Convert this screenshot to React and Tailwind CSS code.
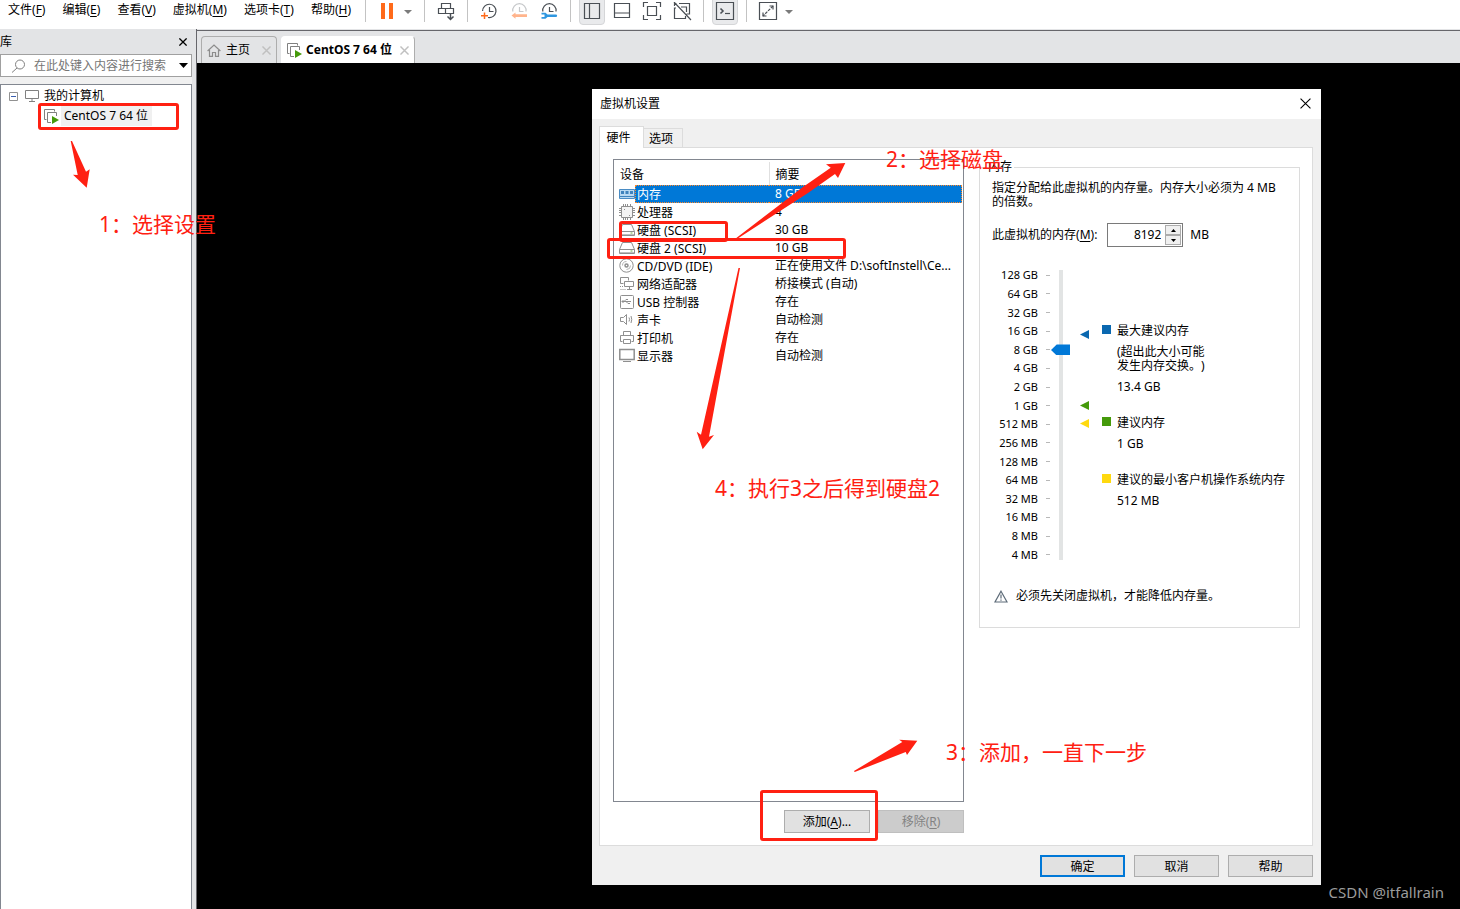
import React, { useState } from 'react';

const menus = [
    { text: '文件', hotkey: 'F' },
    { text: '编辑', hotkey: 'E' },
    { text: '查看', hotkey: 'V' },
    { text: '虚拟机', hotkey: 'M' },
    { text: '选项卡', hotkey: 'T' },
    { text: '帮助', hotkey: 'H' },
];

const devices = [
    { icon: 'memory', name: '内存', summary: '8 GB' },
    { icon: 'cpu', name: '处理器', summary: '4' },
    { icon: 'disk', name: '硬盘 (SCSI)', summary: '30 GB' },
    { icon: 'disk', name: '硬盘 2 (SCSI)', summary: '10 GB' },
    { icon: 'cd', name: 'CD/DVD (IDE)', summary: '正在使用文件 D:\\softInstell\\Ce...' },
    { icon: 'net', name: '网络适配器', summary: '桥接模式 (自动)' },
    { icon: 'usb', name: 'USB 控制器', summary: '存在' },
    { icon: 'sound', name: '声卡', summary: '自动检测' },
    { icon: 'printer', name: '打印机', summary: '存在' },
    { icon: 'display', name: '显示器', summary: '自动检测' },
];

const sizes = [
    '128 GB', '64 GB', '32 GB', '16 GB', '8 GB', '4 GB', '2 GB', '1 GB',
    '512 MB', '256 MB', '128 MB', '64 MB', '32 MB', '16 MB', '8 MB', '4 MB',
];

const Hotkey = ({ text, hotkey }) => (
    <>{text}(<span className="underline underline-offset-2">{hotkey}</span>)</>
);

const Separator = () => <span className="mx-1.5 h-[22px] w-px bg-[#c3c3c3]" />;

const ToolButton = ({ label, active, children }) => (
    <button aria-label={label} className="flex h-6 w-[30px] items-center justify-center">
        <span className={active
            ? 'flex h-[26px] w-[26px] items-center justify-center rounded-b border border-[#d5d6d8] bg-[#e9eaec]'
            : 'flex items-center justify-center'}>
            <svg width="20" height="20" viewBox="0 0 20 20" fill="none" stroke="#4a4f55" strokeWidth="1.2">
                {children}
            </svg>
        </span>
    </button>
);

const Caret = ({ label }) => (
    <button aria-label={label} className="mr-1 flex h-6 w-3 items-center justify-center">
        <svg width="8" height="4" viewBox="0 0 8 4"><path d="M0 0h8L4 4z" fill="#7b7b7b" /></svg>
    </button>
);

const Toolbar = () => (
    <div className="flex">
        <Separator />
        <ToolButton label="暂停">
            <path d="M4 1h4v16H4zM12 1h4v16h-4z" fill="#ff6a1a" stroke="none" />
        </ToolButton>
        <Caret label="电源选项" />
        <Separator />
        <ToolButton label="发送按键">
            <path d="M5.500 1.500h9v5h-9zM2.500 6.500h15v5h-15zM9.500 6.500v5" />
            <path d="M14.500 11.500v6M11.500 14.500l3 3 3-3" strokeWidth="1.500" />
        </ToolButton>
        <Separator />
        <ToolButton label="拍摄快照">
            <path d="M3.600 9A6.700 6.700 0 1 1 9 15.500M10.500 5v4.500h4" />
            <path d="M5.500 10.500v6.500M2 13.700h7" stroke="#ff6a1a" strokeWidth="1.500" />
        </ToolButton>
        <ToolButton label="恢复快照">
            <path d="M3.800 9.500A6.700 6.700 0 1 1 17 9.500M10.500 5v4.500h4" stroke="#c6c8ca" />
            <path d="M2.500 13.500l4-3v1.800H18v2.700H6.500v1.800z" fill="#ffb48c" stroke="none" />
        </ToolButton>
        <ToolButton label="管理快照">
            <path d="M3.800 9.500A6.700 6.700 0 1 1 17 9.500M10.500 5v4.500h4" />
            <path d="M2.500 10.700h4l2 1.700h8.300a1.300 1.300 0 0 1 0 2.700H8.500l-2 1.700h-4v-1.700H5.500v-2.700h-3z" fill="#2f97e0" stroke="none" />
        </ToolButton>
        <Separator />
        <ToolButton label="显示库" active>
            <path d="M2.500 1.500h15v15h-15zM7.500 1.500v15" />
        </ToolButton>
        <ToolButton label="缩略图栏">
            <path d="M2.500 1.500h15v14h-15zM2.500 11h15" />
        </ToolButton>
        <ToolButton label="全屏">
            <path d="M1.500 5V0.500H6M14 0.500h4.500V5M18.500 13v4.500H14M6 17.500H1.500V13M5.500 4.500h9v9h-9z" />
        </ToolButton>
        <ToolButton label="Unity">
            <path d="M7 1.500h10.500v10.500h-3M9 5h5.500v5M4 6H2.500v10.500H13.500V14M2.500 4V1.500h2M2 0l17 18" />
        </ToolButton>
        <Separator />
        <ToolButton label="控制台视图" active>
            <path d="M1.500 0.500h17v17h-17z" />
            <path d="M5.500 6.500L8 9l-2.500 2.500" strokeWidth="1.600" />
            <path d="M10 11.500h5" />
        </ToolButton>
        <Separator />
        <ToolButton label="拉伸客户机">
            <path d="M1.500 0.500h17v17h-17zM11.500 4H15v3.500M8.500 14H5v-3.500" />
            <path d="M15 4L5 14" strokeDasharray="3 1" />
        </ToolButton>
        <Caret label="拉伸选项" />
    </div>
);

const VmIcon = () => (
    <svg width="15" height="15" viewBox="0 0 15 15" className="shrink-0" fill="none" stroke="#808080">
        <path d="M2.500 10.500h-2v-10h10v2" />
        <path d="M7 13.500H3.500v-10h9V7" />
        <path d="M8 7l7 4-7 4z" fill="#459a0b" stroke="none" />
    </svg>
);

const CloseIcon = ({ size, color, width }) => (
    <svg width={size} height={size} viewBox="0 0 10 10" stroke={color} strokeWidth={width}>
        <path d="M0.500 0.500l9 9M9.500 0.500l-9 9" />
    </svg>
);

const Library = () => (
    <aside className="flex w-[197px] shrink-0 flex-col border-r border-[#66666b] bg-[#e3e4e6]">
        <div className="flex h-[25px] items-center justify-between pr-[9px]">
            <h2>库</h2>
            <button aria-label="关闭库"><CloseIcon size={8} color="#000" width={1.6} /></button>
        </div>
        <div className="mr-1 flex h-[23px] items-center border border-[#a0a0a0] bg-white pr-[3px] pl-2.5">
            <svg width="15" height="14" viewBox="0 0 15 14" fill="none" stroke="#808080" className="shrink-0">
                <circle cx="9" cy="5.500" r="4.500" />
                <path d="M6 9l-5 4.500" />
            </svg>
            <input
                type="text"
                aria-label="搜索"
                placeholder="在此处键入内容进行搜索"
                className="ml-2 min-w-0 flex-1 outline-none placeholder:text-[#757575]"
            />
            <button aria-label="搜索选项">
                <svg width="9" height="5" viewBox="0 0 9 5"><path d="M0 0h9L4.500 5z" /></svg>
            </button>
        </div>
        <div className="mr-1 h-[7px] bg-[#f0f0f0]" />
        <ul className="mr-1 flex-1 border border-b-0 border-[#828790] bg-white pt-px leading-5">
            <li>
                <div className="flex items-center pl-2">
                    <svg width="9" height="9" viewBox="0 0 9 9" fill="#fff" stroke="#919191">
                        <path d="M0.500 0.500h8v8h-8z" />
                        <path d="M2 4.500h5" stroke="#3a5fb0" />
                    </svg>
                    <svg width="14" height="12" viewBox="0 0 14 12" fill="none" stroke="#808080" className="mr-[5px] ml-[7px]">
                        <path d="M0.500 0.500h13v8h-13zM7 9v2M4 11.500h6" />
                    </svg>
                    我的计算机
                </div>
                <ul>
                    <li className="flex items-center pl-[43px]">
                        <VmIcon />
                        <span className="ml-0.5 bg-[#f0f0f0] pr-1 pl-[3px]">CentOS 7 64 位</span>
                    </li>
                </ul>
            </li>
        </ul>
    </aside>
);

const VmTabs = () => (
    <div className="flex h-[33px] items-end border-t border-[#66666b] bg-[#e3e4e6] pl-1">
        <div className="flex h-[27px] items-center rounded-t border border-b-0 border-[#adadad] px-[5px]">
            <svg width="14" height="13" viewBox="0 0 14 13" fill="none" stroke="#8c8c8c" strokeWidth="1.200">
                <path d="M0.600 7L7 1l6.400 6M2.500 6v6.400h3V8.500h3v3.900h3V6" />
            </svg>
            <button className="mr-3 ml-[5px]">主页</button>
            <button aria-label="关闭主页"><CloseIcon size={9} color="#c0c0c0" width={1.6} /></button>
        </div>
        <div className="ml-1 flex h-[27px] items-center rounded-t border border-b-0 border-l-white border-t-white border-r-[#adadad] bg-white px-[5px]">
            <VmIcon />
            <button className="mr-2 ml-1 font-bold">CentOS 7 64 位</button>
            <button aria-label="关闭 CentOS 7 64 位"><CloseIcon size={9} color="#c0c0c0" width={1.6} /></button>
        </div>
    </div>
);

const DeviceIcon = ({ name }) => (
    <svg width="16" height="16" viewBox="0 0 16 16" fill="none" stroke="#8f8f8f" className="shrink-0">
        {name === 'memory' && (
            <>
                <path d="M0.500 3.500h15v9h-15z" stroke="#4a8cc4" fill="#b9d9f2" />
                <path d="M2 5h3v3H2zM6.500 5h3v3h-3zM11 5h3v3h-3zM1 10h14v1H1z" fill="#3f83bd" stroke="none" />
            </>
        )}
        {name === 'cpu' && (
            <>
                <path d="M2.500 2.500h11v11h-11z" fill="#f4f4f4" />
                <path d="M4.500 0v2M6.500 0v2M8.500 0v2M11.500 0v2M4.500 14v2M6.500 14v2M8.500 14v2M11.500 14v2M0 4.500h2M0 6.500h2M0 8.500h2M0 11.500h2M14 4.500h2M14 6.500h2M14 8.500h2M14 11.500h2M5 5.500h1M10 11.500h1" />
            </>
        )}
        {name === 'disk' && (
            <>
                <path d="M3.500 2.500h9l3 7v4H0.500v-4zM0.500 9.500h15" />
                <path d="M1 12h14v1H1z" fill="#bdbdbd" stroke="none" />
                <path d="M11.500 11h2" stroke="#6fae4a" />
            </>
        )}
        {name === 'cd' && (
            <>
                <circle cx="7.500" cy="7.500" r="6.700" />
                <circle cx="7.500" cy="7.500" r="1.500" strokeWidth="1.500" />
                <path d="M7.500 3.500a4 4 0 0 0-4 4M11.500 7.500a4 4 0 0 1-4 4" stroke="#b5b5b5" />
            </>
        )}
        {name === 'net' && (
            <>
                <path d="M1.500 1.500h8v3M1.500 1.500v6h3M5.500 5.500h9v5h-9zM10.500 11v2M8 13.500h5" />
                <path d="M1 10.500h4M1.500 13.500h5" strokeDasharray="1 1" />
            </>
        )}
        {name === 'usb' && (
            <>
                <rect x="1.500" y="1.500" width="13" height="13" rx="1" />
                <path d="M3 7.500h9M5 7.500l2-2h2M7 7.500l2 2h2M3 7h2v1H3z" />
            </>
        )}
        {name === 'sound' && (
            <path d="M1.500 5.500h3l3-3v10l-3-3h-3zM10 5.500q1.200 2 0 4M12 4q1.500 3.500 0 7" />
        )}
        {name === 'printer' && (
            <path d="M4.500 5.500v-4h7v4M3.500 11.500h-2v-6h13v6h-2M4.500 9.500h7v4h-7z" />
        )}
        {name === 'display' && (
            <>
                <path d="M0.800 1.500h14.400v10H0.800z" strokeWidth="1.500" />
                <path d="M4 13.500h8" />
            </>
        )}
    </svg>
);

const DeviceTable = () => {
    const [selected, setSelected] = useState(0);

    return (
        <div className="flex-1 border border-[#828790] bg-white px-px pt-0.5">
            <table className="w-full table-fixed">
                <thead>
                    <tr className="h-[23px] text-left">
                        <th className="w-[154px] border-r border-[#e0e0e0] pt-0.5 pl-[5px] font-normal">设备</th>
                        <th className="pt-0.5 pl-1.5 font-normal">摘要</th>
                    </tr>
                </thead>
                <tbody>
                    {devices.map((device, index) => (
                        <tr key={index} onClick={() => setSelected(index)}>
                            <td className="p-0">
                                <div className="flex h-[18px] items-center pl-1">
                                    <DeviceIcon name={device.icon} />
                                    <span className={selected === index
                                        ? 'h-[18px] flex-1 border border-r-0 border-dotted border-[#ff8728] bg-[#0078d7] pt-px pl-px leading-4 text-white'
                                        : 'h-[18px] flex-1 pt-0.5 pl-0.5'}>
                                        {device.name}
                                    </span>
                                </div>
                            </td>
                            <td className="p-0">
                                <div className={selected === index
                                    ? 'h-[18px] truncate border border-l-0 border-dotted border-[#ff8728] bg-[#0078d7] pl-1.5 leading-4 text-white'
                                    : 'h-[18px] truncate pt-px pl-1.5'}>
                                    {device.summary}
                                </div>
                            </td>
                        </tr>
                    ))}
                </tbody>
            </table>
        </div>
    );
};

const MemoryLegend = () => (
    <dl className="ml-[13px] pt-[57px] leading-4 whitespace-nowrap [text-spacing-trim:space-all]">
        <dt className="flex items-start gap-1.5"><span className="mt-0.5 h-[9px] w-[9px] bg-[#0a68b0]" />最大建议内存</dt>
        <dd className="mt-1.5 pl-[15px] leading-[14px]">(超出此大小可能<br />发生内存交换。)</dd>
        <dd className="mt-1.5 pl-[15px]">13.4 GB</dd>
        <dt className="mt-5 flex items-start gap-1.5"><span className="mt-0.5 h-[9px] w-[9px] bg-[#459a0b]" />建议内存</dt>
        <dd className="mt-[5px] pl-[15px]">1 GB</dd>
        <dt className="mt-5 flex items-start gap-1.5"><span className="mt-0.5 h-[9px] w-[9px] bg-[#ffd90f]" />建议的最小客户机操作系统内存</dt>
        <dd className="mt-[5px] pl-[15px]">512 MB</dd>
    </dl>
);

const MemoryPanel = () => {
    const [memory, setMemory] = useState(8192);
    const level = Math.round(Math.log2(memory / 4));

    return (
        <fieldset className="min-w-0 flex-1 self-start border border-[#dcdcdc] pr-2 pb-6 pl-3">
            <legend className="-ml-1.5 px-0.5 leading-4">内存</legend>
            <p className="pt-1.5 leading-[14px]">指定分配给此虚拟机的内存量。内存大小必须为 4 MB<br />的倍数。</p>
            <div className="mt-3.5 flex h-6 items-center">
                <label htmlFor="memory"><Hotkey text="此虚拟机的内存" hotkey="M" />:</label>
                <div className="mr-[7px] ml-2.5 flex h-6 w-[76px] items-center border border-[#7a7a7a] p-px">
                    <input
                        id="memory"
                        type="text"
                        value={memory}
                        onChange={(e) => setMemory(Number(e.target.value) || 4)}
                        className="min-w-0 flex-1 pr-1 text-right outline-none"
                    />
                    <div className="flex h-5 w-4 flex-col">
                        <button aria-label="增加" onClick={() => setMemory(memory + 4)} className="flex flex-1 items-center justify-center border border-[#acacac] bg-[#f0f0f0]">
                            <svg width="5" height="3" viewBox="0 0 5 3"><path d="M0 3h5L2.500 0z" /></svg>
                        </button>
                        <button aria-label="减少" onClick={() => setMemory(memory - 4)} className="flex flex-1 items-center justify-center border border-[#acacac] bg-[#f0f0f0]">
                            <svg width="5" height="3" viewBox="0 0 5 3"><path d="M0 0h5L2.500 3z" /></svg>
                        </button>
                    </div>
                </div>
                MB
            </div>
            <div className="mt-[19px] flex h-[298px]">
                <ul className="flex w-[58px] flex-col text-[11px]">
                    {sizes.map((size) => (
                        <li key={size} className="flex flex-1 items-center justify-end gap-2 leading-4">
                            {size}
                            <span className="h-px w-1 bg-[#b8b8b8]" />
                        </li>
                    ))}
                </ul>
                <input
                    type="range"
                    aria-label="内存大小"
                    min="0"
                    max="15"
                    value={level}
                    onChange={(e) => setMemory(4 * 2 ** Number(e.target.value))}
                    className="mt-1 ml-px h-[290px] w-[19px] appearance-none bg-[linear-gradient(#e2e4e4,#e2e4e4)] bg-[length:4px_100%] bg-center bg-no-repeat [direction:rtl] [writing-mode:vertical-lr] [&::-webkit-slider-thumb]:h-[11px] [&::-webkit-slider-thumb]:w-[19px] [&::-webkit-slider-thumb]:appearance-none [&::-webkit-slider-thumb]:bg-[#0078d7] [&::-webkit-slider-thumb]:[clip-path:polygon(0_50%,30%_0,100%_0,100%_100%,30%_100%)]"
                />
                <svg width="9" height="298" viewBox="0 0 9 298" className="ml-2.5 shrink-0">
                    <path d="M0 68.500l9-4.500v9z" fill="#0a68b0" />
                    <path d="M0 139.500l9-4.500v9z" fill="#459a0b" />
                    <path d="M0 157.500l9-4.500v9z" fill="#ffd90f" />
                </svg>
                <MemoryLegend />
            </div>
            <p className="mt-6 -mb-px flex items-center gap-2 pl-0.5 leading-4">
                <svg width="14" height="13" viewBox="0 0 14 13" fill="none" stroke="#5d6b78" strokeWidth="1.200">
                    <path d="M7 1.200L13 12H1zM7 4.500v4M7 9.500v1.200" />
                </svg>
                必须先关闭虚拟机，才能降低内存量。
            </p>
        </fieldset>
    );
};

const SettingsDialog = () => (
    <section role="dialog" aria-label="虚拟机设置" className="flex min-w-[729px] flex-1 flex-col bg-[#f0f0f0]">
        <header className="flex h-[30px] items-center justify-between bg-white pr-2.5 pb-px pl-2">
            <h1>虚拟机设置</h1>
            <button aria-label="关闭"><CloseIcon size={11} color="#000" width={1} /></button>
        </header>
        <div className="flex flex-1 flex-col pt-[7px] pr-2 pb-2 pl-[7px]">
            <div role="tablist" className="flex h-[21px] items-end">
                <button role="tab" className="z-10 -mb-px h-[22px] w-[45px] border border-b-0 border-[#dcdcdc] bg-white pr-1.5">硬件</button>
                <button role="tab" className="h-[19px] w-[39px] border border-b-0 border-l-0 border-[#dcdcdc] pt-0.5 pr-1">选项</button>
            </div>
            <div className="flex flex-1 gap-[15px] border border-[#dcdcdc] bg-white pt-[11px] pr-3 pb-3 pl-[13px]">
                <div className="flex w-[351px] shrink-0 flex-col">
                    <DeviceTable />
                    <div className="mt-2 flex justify-end gap-2">
                        <button className="h-[23px] w-[86px] border border-[#adadad] bg-[#e1e1e1] pt-px"><Hotkey text="添加" hotkey="A" />...</button>
                        <button disabled className="h-[23px] w-[86px] border border-[#bfbfbf] bg-[#cccccc] pt-px text-[#838383]"><Hotkey text="移除" hotkey="R" /></button>
                    </div>
                </div>
                <MemoryPanel />
            </div>
            <footer className="mt-[9px] flex justify-end gap-[9px]">
                <button className="h-[22px] w-[85px] border-2 border-[#0078d7] bg-[#e1e1e1] pt-0.5">确定</button>
                <button className="h-[22px] w-[85px] border border-[#adadad] bg-[#e1e1e1] pt-0.5">取消</button>
                <button className="h-[22px] w-[85px] border border-[#adadad] bg-[#e1e1e1] pt-0.5">帮助</button>
            </footer>
        </div>
    </section>
);

// Red marks and step notes drawn over the window
const Notes = () => (
    <div className="pointer-events-none absolute inset-0 z-20 overflow-hidden text-[21px] leading-7 whitespace-nowrap text-[#ff2012]">
        <svg className="absolute inset-0 h-full w-full" fill="#ff2012">
            <path d="M70.700 141h1.300L86 171.700l3.700-2.400-3 18.500-13.700-13 4.700 0.200z" />
            <path d="M735 239l68-52 27.700-19.300-4.700-3.400 19.300-1.300-7.300 15-3-4-27 19-71 46z" />
            <path d="M738.500 268h1.500L709 436.700l5-1.700-11.300 14.300-6-17.600 4.300 3z" />
            <path d="M854 771l48.300-29-3-2.300 18 1-10.300 14.300-1.300-3-51 20z" />
        </svg>
        <div className="absolute top-[103px] left-[38px] h-[27px] w-[141px] rounded-[3px] border-[3px] border-[#ff2012]" />
        <div className="absolute top-[221px] left-[619px] h-[21px] w-[109px] rounded-[3px] border-[3px] border-[#ff2012]" />
        <div className="absolute top-[238px] left-[607px] h-[21px] w-[239px] rounded-[3px] border-[3px] border-[#ff2012]" />
        <div className="absolute top-[790px] left-[760px] h-[51px] w-[118px] rounded-[3px] border-[3px] border-[#ff2012]" />
        <p className="absolute top-[210px] left-[99px]">1：选择设置</p>
        <p className="absolute top-[145px] left-[886px]">2：选择磁盘</p>
        <p className="absolute top-[738px] left-[946px]">3：添加，一直下一步</p>
        <p className="absolute top-[474px] left-[715px]">4：执行3之后得到硬盘2</p>
    </div>
);

const App = () => (
    <div className="relative flex min-h-screen flex-col bg-[#e3e4e6] font-['Noto_Sans','Noto_Sans_CJK_SC',sans-serif] text-[12px] leading-4 text-black">
        <div className="flex h-[29px] bg-white">
            <nav className="flex w-[359px] shrink-0 gap-[17px] pl-2 leading-5 whitespace-nowrap">
                {menus.map((menu) => (
                    <button key={menu.hotkey} className="h-5"><Hotkey text={menu.text} hotkey={menu.hotkey} /></button>
                ))}
            </nav>
            <Toolbar />
        </div>
        <div className="flex flex-1">
            <Library />
            <main className="flex flex-1 flex-col pt-px">
                <VmTabs />
                <div className="flex flex-1 bg-black pt-[26px] pr-[139px] pb-6 pl-[395px]">
                    <SettingsDialog />
                </div>
            </main>
        </div>
        <Notes />
        <span className="absolute right-4 bottom-[5px] z-20 text-[15px] leading-6 text-[#9c9c9c]">CSDN @itfallrain</span>
    </div>
);

export default App;
